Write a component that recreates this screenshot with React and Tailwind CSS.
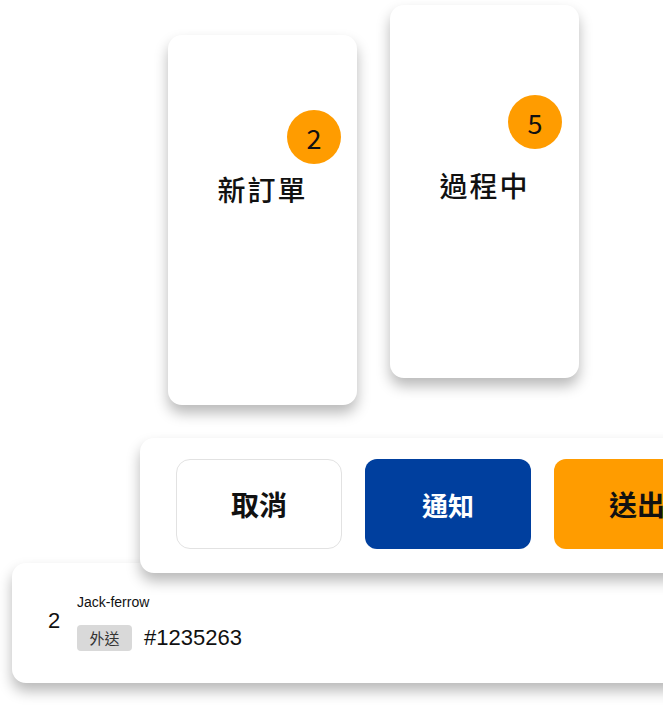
export default function App() {
  const font = { fontFamily: '"Noto Sans CJK TC", "Noto Sans", sans-serif' };
  return (
    <div className="relative w-[663px] h-[708px] bg-white overflow-hidden text-[#111]" style={font}>
      {/* Column card 1 */}
      <div className="absolute left-[168px] top-[35px] w-[189px] h-[370px] bg-white rounded-[14px] shadow-[0_8px_14px_rgba(0,0,0,0.28)]">
        <div className="absolute left-[119px] top-[75px] w-[54px] h-[54px] rounded-full bg-[#ff9c00] flex items-center justify-center text-[27px] leading-none">2</div>
        <div className="absolute left-0 right-0 top-[133px] text-center text-[28px] font-medium tracking-[2px]">新訂單</div>
      </div>
      {/* Column card 2 */}
      <div className="absolute left-[390px] top-[5px] w-[189px] h-[373px] bg-white rounded-[14px] shadow-[0_8px_14px_rgba(0,0,0,0.28)]">
        <div className="absolute left-[118px] top-[90px] w-[54px] h-[54px] rounded-full bg-[#ff9c00] flex items-center justify-center text-[27px] leading-none">5</div>
        <div className="absolute left-0 right-0 top-[159px] text-center text-[28px] font-medium tracking-[2px]">過程中</div>
      </div>
      {/* Order card */}
      <div className="absolute left-[12px] top-[563px] w-[700px] h-[120px] bg-white rounded-[14px] shadow-[0_8px_14px_rgba(0,0,0,0.28)] flex items-start pl-[36px] pt-[32px]">
        <div className="text-[22px] leading-none w-[29px] mt-[15px]" style={{ fontFamily: '"Liberation Sans", sans-serif' }}>2</div>
        <div className="flex flex-col">
          <div className="text-[14px] leading-none" style={{ fontFamily: '"Liberation Sans", sans-serif' }}>Jack-ferrow</div>
          <div className="flex items-center gap-[12px] mt-[16px]">
            <span className="w-[55px] h-[26px] rounded-[4px] bg-[#d9d9d9] flex items-center justify-center text-[15px] text-[#333]">外送</span>
            <span className="text-[22px] leading-none" style={{ fontFamily: '"Liberation Sans", sans-serif' }}>#1235263</span>
          </div>
        </div>
      </div>
      {/* Action panel */}
      <div className="absolute left-[140px] top-[438px] w-[600px] h-[135px] bg-white rounded-[14px] shadow-[0_8px_14px_rgba(0,0,0,0.28)] flex items-start gap-[23px] pl-[36px] pt-[21px]">
        <button className="w-[166px] h-[90px] rounded-[14px] border border-[#e2e2e2] bg-white text-[28px] font-bold text-[#111]">取消</button>
        <button className="w-[166px] h-[90px] rounded-[12px] bg-[#003f9e] text-[26px] font-bold text-white">通知</button>
        <button className="w-[166px] h-[90px] rounded-[12px] bg-[#ff9c00] text-[28px] font-bold text-[#111]">送出</button>
      </div>
    </div>
  );
}
